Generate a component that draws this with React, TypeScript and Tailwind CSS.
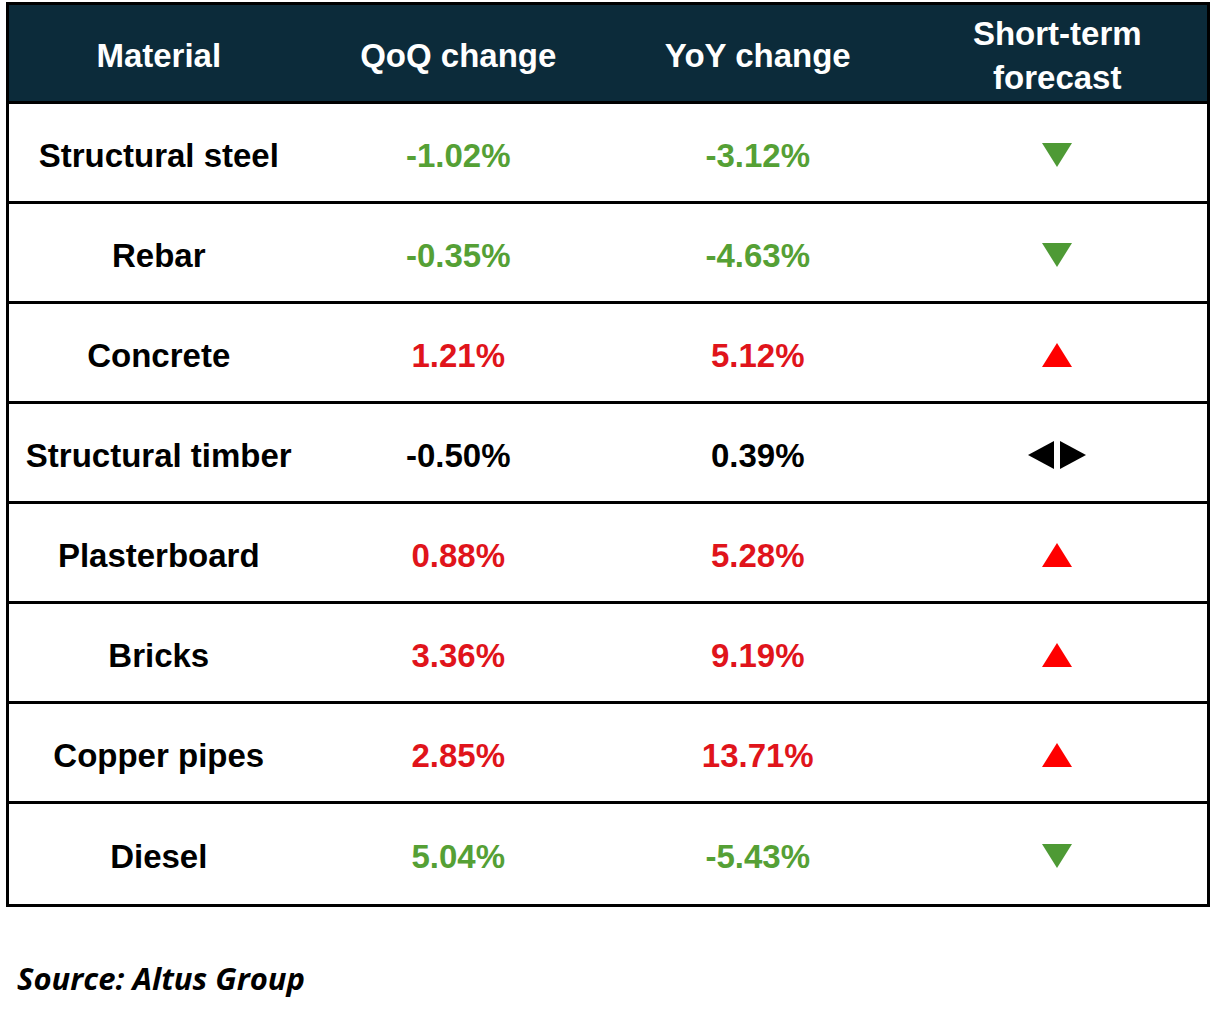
import React from "react";

type Dir = "down" | "up" | "flat";
const rows: { name: string; qoq: string; yoy: string; qc: string; yc: string; dir: Dir }[] = [
  { name: "Structural steel", qoq: "-1.02%", yoy: "-3.12%", qc: "g", yc: "g", dir: "down" },
  { name: "Rebar", qoq: "-0.35%", yoy: "-4.63%", qc: "g", yc: "g", dir: "down" },
  { name: "Concrete", qoq: "1.21%", yoy: "5.12%", qc: "r", yc: "r", dir: "up" },
  { name: "Structural timber", qoq: "-0.50%", yoy: "0.39%", qc: "k", yc: "k", dir: "flat" },
  { name: "Plasterboard", qoq: "0.88%", yoy: "5.28%", qc: "r", yc: "r", dir: "up" },
  { name: "Bricks", qoq: "3.36%", yoy: "9.19%", qc: "r", yc: "r", dir: "up" },
  { name: "Copper pipes", qoq: "2.85%", yoy: "13.71%", qc: "r", yc: "r", dir: "up" },
  { name: "Diesel", qoq: "5.04%", yoy: "-5.43%", qc: "g", yc: "g", dir: "down" },
];

const colorClass = (c: string) =>
  c === "g" ? "text-[#55a035]" : c === "r" ? "text-[#e0141b]" : "text-black";

function Arrow({ dir }: { dir: Dir }) {
  if (dir === "down")
    return (
      <svg width="30" height="24" viewBox="0 0 30 24">
        <polygon points="0,0 30,0 15,24" fill="#4e9a35" />
      </svg>
    );
  if (dir === "up")
    return (
      <svg width="30" height="24" viewBox="0 0 30 24">
        <polygon points="15,0 30,24 0,24" fill="#ff0000" />
      </svg>
    );
  return (
    <svg width="58" height="28" viewBox="0 0 58 28">
      <polygon points="0,14 26,0 26,28" fill="#000" />
      <polygon points="32,0 58,14 32,28" fill="#000" />
    </svg>
  );
}

export default function App() {
  return (
    <div className="w-[1220px] h-[1014px] bg-white overflow-hidden" style={{ fontFamily: '"Liberation Sans", Arial, sans-serif' }}>
      <div className="ml-[6px] mt-[2px] w-[1204px] border-[3px] border-black">
        <div className="grid grid-cols-4 h-[99px] bg-[#0c2b3a] border-b-[3px] border-black text-white font-bold text-[33px] leading-[44px]">
          <div className="flex items-center justify-center text-center pt-[6px]">Material</div>
          <div className="flex items-center justify-center text-center pt-[6px]">QoQ change</div>
          <div className="flex items-center justify-center text-center pt-[6px]">YoY change</div>
          <div className="flex items-center justify-center text-center pt-[6px]">Short-term<br />forecast</div>
        </div>
        {rows.map((r, i) => (
          <div
            key={r.name}
            className={`grid grid-cols-4 h-[100px] font-bold text-[33px] ${i < rows.length - 1 ? "border-b-[3px] border-black" : ""}`}
          >
            <div className="flex items-center justify-center text-black pt-[6px]">{r.name}</div>
            <div className={`flex items-center justify-center pt-[6px] ${colorClass(r.qc)}`}>{r.qoq}</div>
            <div className={`flex items-center justify-center pt-[6px] ${colorClass(r.yc)}`}>{r.yoy}</div>
            <div className="flex items-center justify-center pt-[4px]">
              <Arrow dir={r.dir} />
            </div>
          </div>
        ))}
      </div>
      <div
        className="mt-[48px] pl-[17px] text-[31px] font-bold italic text-black"
        style={{ fontFamily: '"Open Sans", "Noto Sans", sans-serif' }}
      >
        Source: Altus Group
      </div>
    </div>
  );
}
